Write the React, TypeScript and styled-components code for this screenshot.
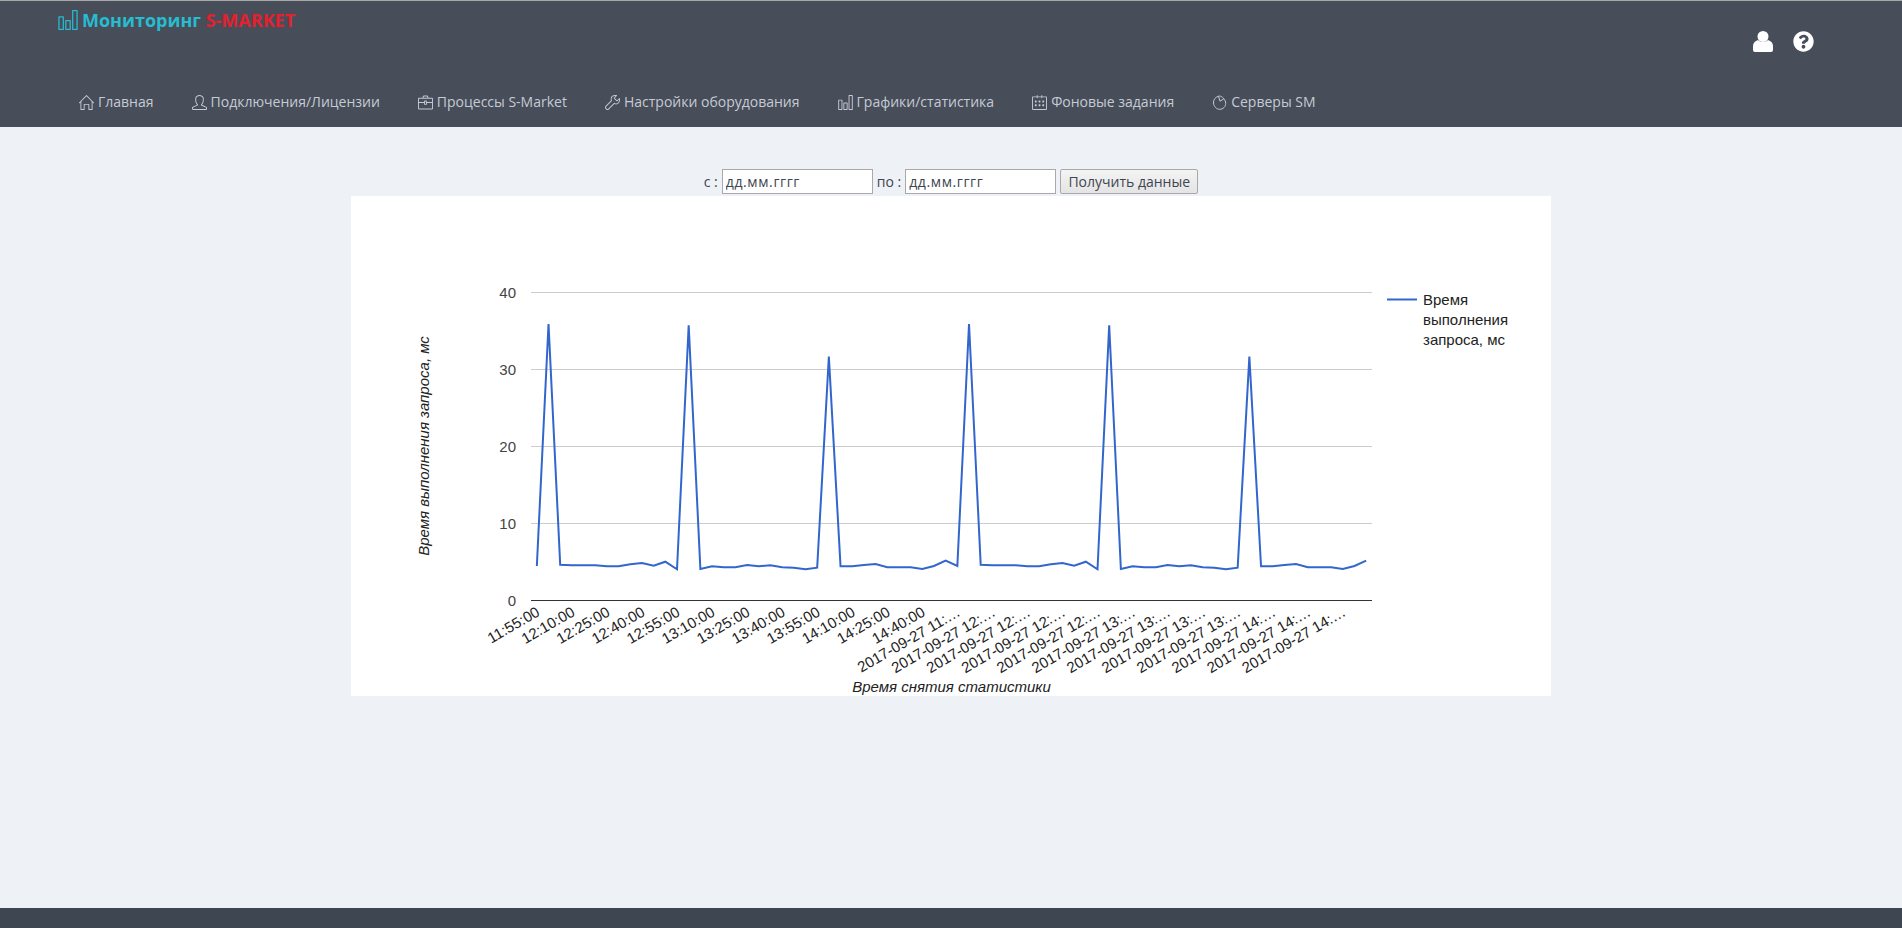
import React from 'react';
import styled, {createGlobalStyle} from 'styled-components';
import {FaQuestionCircle} from 'react-icons/fa';
import {
  SlBriefcase,
  SlCalender,
  SlChart,
  SlHome,
  SlUser,
  SlWrench,
} from 'react-icons/sl';

const GlobalStyle = createGlobalStyle`
  html, body {
    margin: 0;
    padding: 0;
    background: #eef1f6;
    font-family: "Open Sans", "Liberation Sans", sans-serif;
    font-size: 14px;
    color: #3d4650;
  }
`;

const Page = styled.div`
  display: flex;
  flex-direction: column;
  min-height: 928px;
`;

const Header = styled.header`
  display: flex;
  flex-direction: column;
  height: 127px;
  box-sizing: border-box;
  background: #474d59;
  border-top: 1px solid #a8a8a8;
`;

const TopRow = styled.div`
  display: flex;
  justify-content: space-between;
  align-items: flex-start;
  padding: 7px 88px 0 58px;
`;

const Logo = styled.a`
  display: flex;
  align-items: center;
  gap: 4px;
  font-size: 18px;
  font-weight: 700;
  line-height: 24px;
  color: #27bcd0;

  svg {
    font-size: 20px;
  }

  span {
    color: #e5202e;
  }
`;

const UserTools = styled.div`
  display: flex;
  gap: 20px;
  margin-top: 23px;
  color: #fff;
  font-size: 21px;
  line-height: 0;
`;

const Nav = styled.nav`
  display: flex;
  gap: 38px;
  margin-top: auto;
  padding: 0 0 15px 79px;
`;

const NavItem = styled.a`
  display: flex;
  align-items: center;
  gap: 4px;
  color: #c5cbd4;
  font-size: 14px;
  line-height: 20px;
  white-space: nowrap;

  svg {
    font-size: 15px;
  }
`;

const Main = styled.main`
  flex: 1;
  padding-top: 42px;
`;

const FilterForm = styled.form`
  display: flex;
  justify-content: center;
  align-items: center;
  height: 25px;
  gap: 4px;
  margin-bottom: 2px;
`;

const DateInput = styled.input`
  box-sizing: border-box;
  width: 151px;
  height: 25px;
  padding: 0 3px;
  border: 1px solid #a9a9a9;
  background: #fff;
  color: #3d4650;
  font-family: "Open Sans", sans-serif;
  font-size: 14px;
  letter-spacing: 0.6px;
`;

const SubmitButton = styled.button`
  box-sizing: border-box;
  width: 138px;
  height: 25px;
  padding: 0;
  border: 1px solid #a9a9a9;
  border-radius: 2px;
  background: linear-gradient(#f4f4f4, #e4e4e4);
  color: #3d4650;
  font-family: "Open Sans", sans-serif;
  font-size: 14px;
`;

const ChartPanel = styled.div`
  width: 1200px;
  height: 500px;
  margin: 0 auto;
  background: #fff;
`;

const ChartSvg = styled.svg`
  display: block;
  font-family: "Liberation Sans", Arial, sans-serif;
  font-size: 15px;
`;

const Footer = styled.footer`
  height: 20px;
  background: #3e4651;
`;

const PersonIcon = () => (
  <svg width="20" height="21" viewBox="0 0 20 21" fill="currentColor">
    <circle cx="10" cy="5.5" r="5.5" />
    <path d="M0 19v-4c0-3 2-5 5-6 1.5 1.500 3 2 5 2s3.500-.5 5-2c3 1 5 3 5 6v4a2 2 0 0 1-2 2H2a2 2 0 0 1-2-2z" />
  </svg>
);

// tilted computer mouse, the icon of the servers item
const TiltedMouseIcon = () => (
  <svg
    width="15"
    height="15"
    viewBox="0 0 15 15"
    fill="none"
    stroke="currentColor"
    strokeWidth="1"
  >
    <path d="M6.5 1.2C3.2 2.2 1.2 4.8 1.5 8c.3 3.600 3 6.300 6.200 6.300 3.500 0 6-2.700 6-6 0-1.800-.7-3.300-1.800-4.500" />
    <path d="M6.500 1.200l1.500 5 3.900-2.400c-.8-1.200-1.700-1.800-2.700-2.300-.9-.4-1.800-.7-2.700-.3z" />
  </svg>
);

const menu = [
  {icon: <SlHome />, label: 'Главная'},
  {icon: <SlUser />, label: 'Подключения/Лицензии'},
  {icon: <SlBriefcase />, label: 'Процессы S-Market'},
  {icon: <SlWrench />, label: 'Настройки оборудования'},
  {icon: <SlChart />, label: 'Графики/статистика'},
  {icon: <SlCalender />, label: 'Фоновые задания'},
  {icon: <TiltedMouseIcon />, label: 'Серверы SM'},
];

// one cycle of the query time, it repeats twice on the chart
const cycle = [
  4.48, 35.9, 4.65, 4.57, 4.57, 4.57, 4.44, 4.44, 4.7, 4.87, 4.52, 5.04, 4.05,
  35.73, 4.09, 4.44, 4.31, 4.31, 4.61, 4.44, 4.57, 4.31, 4.26, 4.05, 4.26,
  31.67, 4.44, 4.44, 4.61, 4.74, 4.31, 4.31, 4.31, 4.09, 4.48, 5.17,
];
const series = [...cycle, ...cycle];

const PLOT_LEFT = 180;
const PLOT_RIGHT = 1021;
const PLOT_ZERO = 404.5;
const PX_PER_UNIT = 7.7;
const STEP = (PLOT_RIGHT - PLOT_LEFT) / series.length;

const pointX = (i: number) => PLOT_LEFT + STEP * (i + 0.5);
const pointY = (v: number) => PLOT_ZERO - v * PX_PER_UNIT;

const shortTicks = [
  '11:55:00',
  '12:10:00',
  '12:25:00',
  '12:40:00',
  '12:55:00',
  '13:10:00',
  '13:25:00',
  '13:40:00',
  '13:55:00',
  '14:10:00',
  '14:25:00',
  '14:40:00',
];
const longTicks = [
  '11', '12', '12', '12', '12', '13', '13', '13', '13', '14', '14', '14',
].map(h => `2017-09-27 ${h}:…`);
const ticks = [...shortTicks, ...longTicks];

const Chart = () => (
  <ChartSvg width="1200" height="500" viewBox="0 0 1200 500">
    {[40, 30, 20, 10].map(v => (
      <line
        key={v}
        x1={PLOT_LEFT}
        x2={PLOT_RIGHT}
        y1={pointY(v)}
        y2={pointY(v)}
        stroke="#cccccc"
      />
    ))}
    {[40, 30, 20, 10, 0].map(v => (
      <text key={v} x="165" y={pointY(v) + 5} textAnchor="end" fill="#444444">
        {v}
      </text>
    ))}
    <line
      x1={PLOT_LEFT}
      x2={PLOT_RIGHT}
      y1={PLOT_ZERO}
      y2={PLOT_ZERO}
      stroke="#333333"
    />
    <polyline
      fill="none"
      stroke="#3366cc"
      strokeWidth="2"
      points={series.map((v, i) => `${pointX(i)},${pointY(v)}`).join(' ')}
    />
    {ticks.map((label, i) => {
      const x = pointX(i * 3) + 4;
      return (
        <text
          key={i}
          x={x}
          y={419}
          textAnchor="end"
          fill="#222222"
          transform={`rotate(-30 ${x} 419)`}
        >
          {label}
        </text>
      );
    })}
    <text
      x="600.5"
      y="496"
      textAnchor="middle"
      fontStyle="italic"
      fill="#222222"
    >
      Время снятия статистики
    </text>
    <text
      x="0"
      y="0"
      textAnchor="middle"
      fontStyle="italic"
      fill="#222222"
      transform="translate(78 250) rotate(-90)"
    >
      Время выполнения запроса, мс
    </text>
    <line x1="1036" x2="1066" y1="103.5" y2="103.5" stroke="#3366cc" strokeWidth="2" />
    <text x="1072" y="109" fill="#222222">
      Время
    </text>
    <text x="1072" y="129" fill="#222222">
      выполнения
    </text>
    <text x="1072" y="149" fill="#222222">
      запроса, мс
    </text>
  </ChartSvg>
);

const App = () => (
  <>
    <GlobalStyle />
    <Page>
      <Header>
        <TopRow>
          <Logo>
            <SlChart />
            <div>
              Мониторинг <span>S-MARKET</span>
            </div>
          </Logo>
          <UserTools>
            <PersonIcon />
            <FaQuestionCircle />
          </UserTools>
        </TopRow>
        <Nav>
          {menu.map(item => (
            <NavItem key={item.label}>
              {item.icon}
              {item.label}
            </NavItem>
          ))}
        </Nav>
      </Header>
      <Main>
        <FilterForm>
          <span>с :</span>
          <DateInput readOnly value="дд.мм.гггг" />
          <span>по :</span>
          <DateInput readOnly value="дд.мм.гггг" />
          <SubmitButton type="button">Получить данные</SubmitButton>
        </FilterForm>
        <ChartPanel>
          <Chart />
        </ChartPanel>
      </Main>
      <Footer />
    </Page>
  </>
);

export default App;
